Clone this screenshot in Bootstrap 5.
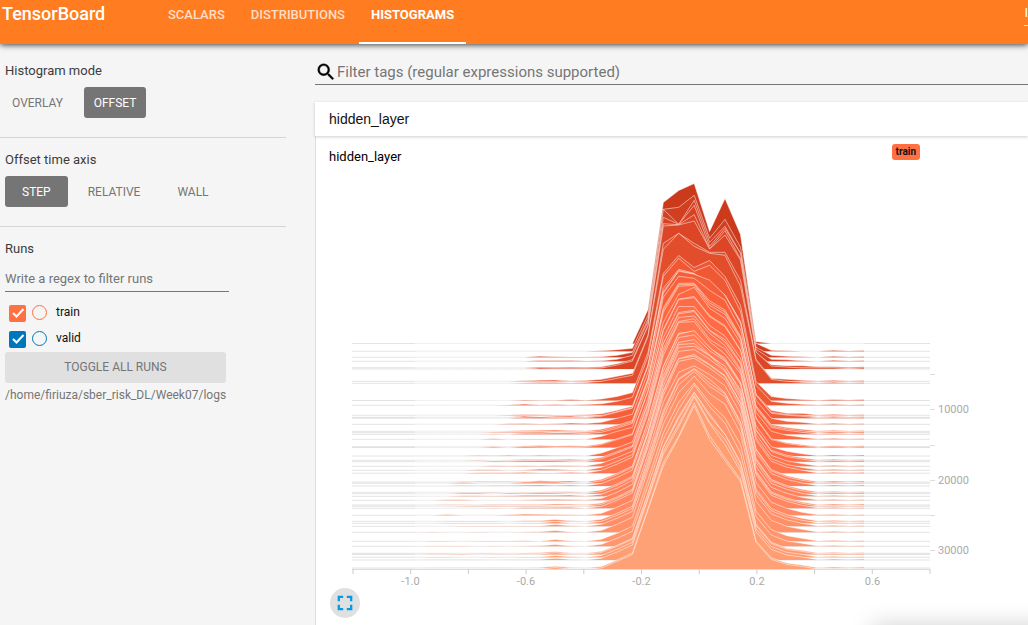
<!DOCTYPE html>
<html lang="en">
<head>
<meta charset="utf-8">
<meta name="viewport" content="width=device-width, initial-scale=1">
<title>TensorBoard</title>
<link href="https://cdn.jsdelivr.net/npm/bootstrap@5.3.0/dist/css/bootstrap.min.css" rel="stylesheet">
<style>
  body { font-family: Roboto, "Liberation Sans", sans-serif; font-size: 13px; line-height: 16px; background: #f5f5f5; color: #3c3c3c; overflow: hidden; min-height: 100vh; }
  .topbar { background: #ff7c20; height: 44px; box-shadow: 0 1px 6px rgba(0,0,0,.75); }
  .brand { font-size: 18px; line-height: 28px; width: 156px; padding-left: 2px; color: #fff; font-weight: 500; flex: none; }
  .tab-link { color: rgba(255,255,255,.75); font-weight: 500; line-height: 30px; padding: 0 12px; border-bottom: 2px solid transparent; text-decoration: none; flex: none; }
  .tab-link.active { color: #fff; font-weight: 700; border-color: #fff; }
  .tab-cut { color: #fff; margin-top: 5px; height: 21px; border-bottom: 1px solid rgba(255,255,255,.8); }
  .sidebar { width: 286px; flex: none; }
  .sidebar section { padding: 14px 0 0 5px; border-bottom: 1px solid #d5d5d5; height: 89px; }
  .sidebar section.first { height: 94px; padding-top: 19px; }
  .sidebar section.last { border: 0; height: auto; }
  .mode { font-size: 12px; line-height: 15px; padding: 9px 9px 7px; border: 0; border-radius: 3px; color: #757575; min-width: 62px; background: none; }
  .mode.on { background: #757575; color: #fff; }
  .mode.flush { padding-left: 7px; margin-right: 12px; }
  .mode.wide { padding-inline: 17px; margin-right: 3px; }
  .regex, .tagfilter { border: 0; border-bottom: 1px solid #757575; border-radius: 0; background: none; outline: 0; padding: 0; }
  .regex::placeholder, .tagfilter input::placeholder { color: #757575; opacity: 1; }
  .regex { width: 224px; height: 26px; display: block; margin-top: 9px; }
  .runs { padding-top: 11px; }
  .run { height: 26px; padding-left: 4px; color: #111; font-size: 12px; }
  .run:last-child { height: 23px; }
  .run label { margin-top: 1px; }
  .run .form-check-input { width: 17px; height: 17px; margin: 2px 6px 0 0; border: 0; border-radius: 2px; background-color: var(--run); box-shadow: none; }
  .run .form-check-input:checked { background-size: 17px; background-image: url("data:image/svg+xml,%3Csvg xmlns='http://www.w3.org/2000/svg' viewBox='0 0 17 17'%3E%3Cpath d='M4 8l3.500 3.500L14.500 4' fill='none' stroke='white' stroke-width='2'/%3E%3C/svg%3E"); }
  .run .ring { appearance: none; width: 15px; height: 15px; margin: 2px 9px 0 0; border: 1px solid var(--run); border-radius: 50%; background: none; }
  .toggle { width: 221px; background: #e0e0e0; color: #757575; border: 0; border-radius: 3px; font-size: 12px; line-height: 15px; padding: 8px 0; display: block; }
  .logdir { font-size: 12px; color: #757575; margin-top: 4px; }
  .main { margin-left: 29px; min-width: 0; }
  .tagfilter { height: 26px; margin-top: 15px; }
  .tagfilter input { border: 0; background: none; outline: 0; font-size: 15px; padding: 0; }
  .pane-head { height: 34px; margin-top: 17px; background: #fff; font: 14px/34px "Liberation Sans", sans-serif; color: #111; border: 0; padding: 0 14px; text-align: left; box-shadow: 0 1px 3px rgba(0,0,0,.2); position: relative; z-index: 1; }
  .pane { background: #fff; border-left: 1px solid #ddd; min-height: 490px; color: #000; }
  .pane-title { padding: 8px 108px 0 13px; height: 34px; }
  .pane-name { padding-top: 5px; }
  .run-tag { background: #ff7043; color: #111; font-size: 10px; font-weight: 700; line-height: 16px; height: 16px; border-radius: 3px; padding: 0 4px; }
  .chart { display: block; width: 100%; height: auto; }
  .expand { width: 30px; height: 30px; border: 0; border-radius: 50%; background: #e0e0e0; margin: 0 0 0 14px; padding: 0; display: grid; place-items: center; }
  .corner-glow { position: fixed; right: -60px; bottom: -40px; width: 210px; height: 34px; box-shadow: 0 0 24px 6px rgba(0,0,0,.18); }
</style>
</head>
<body>
<header class="topbar d-flex position-relative">
  <div class="brand">TensorBoard</div>
  <nav class="d-flex flex-grow-1" style="gap:2px">
    <a class="tab-link" href="#">SCALARS</a>
    <a class="tab-link" href="#">DISTRIBUTIONS</a>
    <a class="tab-link active" href="#">HISTOGRAMS</a>
  </nav>
  <a href="#" class="tab-cut text-decoration-none">I</a>
</header>
<div class="d-flex">
  <aside class="sidebar">
    <section class="first">
      <div>Histogram mode</div>
      <div class="d-flex mt-2">
        <button class="mode flush">OVERLAY</button>
        <button class="mode on">OFFSET</button>
      </div>
    </section>
    <section>
      <div>Offset time axis</div>
      <div class="d-flex mt-2">
        <button class="mode on wide">STEP</button>
        <button class="mode wide">RELATIVE</button>
        <button class="mode wide">WALL</button>
      </div>
    </section>
    <section class="last">
      <label for="regex" class="d-block">Runs</label>
      <input id="regex" class="regex" placeholder="Write a regex to filter runs">
      <div class="runs">
        <div class="run d-flex" style="--run:#ff7043"><input class="form-check-input" type="checkbox" id="r1" checked><input class="ring" type="radio" name="solo" aria-label="Only train"><label for="r1">train</label></div>
        <div class="run d-flex" style="--run:#0077bb"><input class="form-check-input" type="checkbox" id="r2" checked><input class="ring" type="radio" name="solo" aria-label="Only valid"><label for="r2">valid</label></div>
      </div>
      <button class="toggle">TOGGLE ALL RUNS</button>
      <div class="logdir">/home/firiuza/sber_risk_DL/Week07/logs</div>
    </section>
  </aside>
  <main class="main flex-grow-1">
    <div class="tagfilter d-flex align-items-center">
      <svg width="22" height="22" viewBox="0 0 24 24" class="flex-shrink-0" aria-hidden="true"><path d="M15.5 14h-.79l-.28-.27A6.471 6.471 0 0 0 16 9.5 6.5 6.5 0 1 0 9.500 16c1.610 0 3.090-.59 4.230-1.570l.27.28v.79l5 4.990L20.490 19l-4.990-5zm-6 0C7.010 14 5 11.990 5 9.500S7.010 5 9.500 5 14 7.010 14 9.500 11.990 14 9.500 14z" fill="#000" stroke="#000" stroke-width=".4"/></svg>
      <input class="flex-grow-1" aria-label="Filter tags" placeholder="Filter tags (regular expressions supported)">
    </div>
    <button class="pane-head w-100 d-block">hidden_layer</button>
    <div class="pane">
      <div class="pane-title d-flex justify-content-between align-items-start"><span class="pane-name">hidden_layer</span><span class="run-tag">train</span></div>
      <svg class="chart" viewBox="316 170 712 418" id="chart" role="img" aria-label="hidden_layer histogram"></svg>
      <button class="expand" aria-label="Expand"><svg width="22" height="22" viewBox="0 0 24 24"><path fill="#039be5" d="M4 4h6v2.500H6.500V10H4zM14 4h6v6h-2.500V6.500H14zM4 14h2.500v3.500H10V20H4zM17.500 14H20v6h-6v-2.500h3.500z"/></svg></button>
    </div>
  </main>
</div>
<div class="corner-glow"></div>
<script src="https://cdn.jsdelivr.net/npm/bootstrap@5.3.0/dist/js/bootstrap.bundle.min.js"></script>
<script>
const svg = document.getElementById('chart');
const add = (tag, attrs, text) => {
  const e = document.createElementNS('http://www.w3.org/2000/svg', tag);
  for (const k in attrs) e.setAttribute(k, attrs[k]);
  if (text) e.textContent = text;
  svg.appendChild(e);
};
// baseline of every recorded step
const bases = [343.5,351.3,357.3,361.3,367.7,369,381.3,383.3,400.5,405.3,415.3,417.3,418.2,424.3,431.3,432.7,434.3,439.3,446.7,447.6,456,460.3,461.7,466.3,470.3,473.2,482,483.3,486,492.3,493.7,496.3,500.3,505,506.3,508.3,515.3,521.3,523.3,526.3,532.3,541.3,546.3,553.3,554.4,557.3,560,568,569.4];
// bar tops per bin: 601..818, as heights above the baseline
const xs = [601.5,617,632.4,648,663.3,678.7,694.2,709.6,725,740.5,756,771.3,786.8,802,818];
const keys = [
 [343.5,[0,0,0,34,141,153,160,112,145,109,2,0,0,0,0]],
 [351.3,[.5,1.5,3,36,142,144,156,113,132,104,8,1,.5,0,0]],
 [357.3,[.5,2,5,38,148,133,157,115,131,104,10,2,1,.5,0]],
 [361.3,[.5,2,6,40,144,137,156,115,133,108,12,2,1.5,.5,0]],
 [367.7,[1,4,8,42,144,143,153,119,137,109,15,3,2,2,1]],
 [369,[1,4,8,43,143,144,148,120,134,109,17,3,2,1,1]],
 [381.3,[2,5,8,46,138,148,138,129,129,101,22,3,2,1,1]],
 [383.3,[2,5,8,47,134,150,137,130,128,97,23,4,2,1,1]],
 [400.5,[1.5,4,8,48,127,145,133,140,124,95,19,4,2,1,1]],
 [405.3,[1.5,4,8,49,129,147,134,140,125,94,20,4,2,1,1]],
 [415.3,[1.5,5,9,50,127,146,142,127,120,94,21,5,2,2,1]],
 [418.2,[2,6,10,52,125,147,144,138,123,95,23,5,3,2,1]],
 [424.3,[2,6,10,52,127,148,146,134,124,95,24,6,3,2,1]],
 [434.3,[2,6,11,53,122,148,149,129,120,95,26,7,4,2,1]],
 [439.3,[3,8,12,54,117,145,152,131,121,96,27,8,4,2,1]],
 [447.6,[3,8,13,56,117,148,150,131,121,97,29,8,4,2,1]],
 [473.2,[3,9,16,60,117,150,152,132,120,99,33,12,6,3,1]],
 [500.3,[2,8,16,62,115,148,151,141,129,102,34,13,7,3,1]],
 [515.3,[2,8,15,62,112,144,150,141,131,101,33,13,7,3,1.5]],
 [532.3,[2,8,15,61,109,141,157,140,127,98,31,12,6,3,1]],
 [553.3,[2,8,15,60,106,136,162,138,120,92,29,11,5,3,1]],
 [569.4,[1.5,8,15,59,104,131,165,131,109,87,27,10,5,3,1]]];
const ramp = [[343,204,58,28],[361,216,66,36],[383,226,78,44],[405,240,88,52],[434,254,102,62],[460,255,112,74],[500,255,132,94],[569,255,161,118]];
const lerp = (t, y, n) => {
  let i = 0; while (i < t.length - 2 && y > t[i + 1][0]) i++;
  const f = (y - t[i][0]) / (t[i + 1][0] - t[i][0]);
  return n(t[i], t[i + 1], f);
};
let seed = 7;
const rnd = () => (seed = (seed * 16807) % 2147483647) / 2147483647;

bases.forEach((b, i) => {
  const h = lerp(keys, b, (p, q, f) => p[1].map((v, k) => v + (q[1][k] - v) * f));
  const c = lerp(ramp, b, (p, q, f) => [1, 2, 3].map(k => Math.round(p[k] + (q[k] - p[k]) * f)));
  // the left tail reaches further out as training goes on
  const start = 545 - Math.min(1, (b - 343) / 200) * 125;
  const pts = [[415, b]];
  for (let x = 416.5; x < 590; x += 15.4) {
    const r = rnd();
    let v = x < start ? 0 : x > 520 ? .2 + r * 1.1 : r > .35 ? r * .7 : 0;
    if (b > 519) v = Math.abs(x - 555) < 8 ? 1.8 : v * .5;
    if (b < 355) v = 0;
    if (x > 575) v *= b < 455 ? .7 : .2;
    pts.push([x, b - v]);
  }
  xs.forEach((x, k) => {
    const n = b > 450 && k > 2 && k < 10 ? (rnd() - .5) * 3 : 0;
    const gap = k == 14 && b > 370 ? .3 : 1;
    pts.push([x, b - h[k] * gap + n]);
  });
  [[833.5, 1], [849, .4], [864, .9]].forEach(([x, v]) => pts.push([x, b - (b < 350 ? 0 : v)]));
  const line = 'M' + pts.map(p => p[0].toFixed(1) + ' ' + p[1].toFixed(1)).join('L');
  add('path', { d: `M352 ${b}H930`, stroke: '#000', 'stroke-opacity': .11, fill: 'none' });
  add('path', { d: line + `L864 ${b}H415Z`, fill: `rgb(${c})` });
  add('path', { d: line, fill: 'none', stroke: '#fff', 'stroke-opacity': .5, 'stroke-width': 1 });
});

add('path', { d: 'M352 569.500H930', stroke: '#ddd' });
for (let i = 0; i < 11; i++) add('path', { d: `M${353 + i * 57.7} 569v5`, stroke: '#ccc' });
[['-1.0', 410.5], ['-0.6', 526], ['-0.2', 641.5], ['0.2', 757], ['0.6', 872.5]].forEach(([t, x]) =>
  add('text', { x, y: 585, 'text-anchor': 'middle', 'font-size': 11, fill: '#aaa' }, t));
[374.5, 409.5, 445.5, 480.5, 515.5, 550.5].forEach(y => add('path', { d: `M930 ${y}h5`, stroke: '#ddd' }));
[['10000', 413], ['20000', 484], ['30000', 554]].forEach(([t, y]) =>
  add('text', { x: 938, y, 'font-size': 11, fill: '#aaa' }, t));
</script>
</body>
</html>
